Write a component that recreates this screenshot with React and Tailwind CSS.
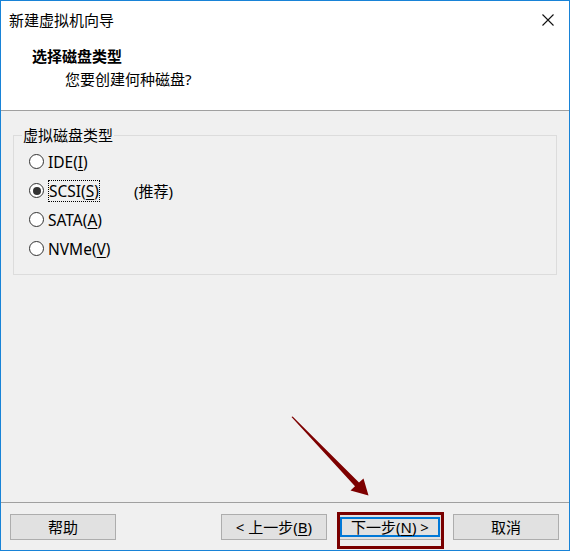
import React from "react";

const font = { fontFamily: '"Noto Sans", "Noto Sans CJK SC", sans-serif' };

function Radio({ checked }) {
  return (
    <span className="w-[15px] h-[15px] rounded-full border border-[#333333] bg-white flex items-center justify-center shrink-0">
      {checked && <span className="w-[8px] h-[8px] rounded-full bg-[#333333]" />}
    </span>
  );
}

function Row({ checked, children, extra }) {
  return (
    <div className="h-[29px] flex items-center">
      <Radio checked={checked} />
      <div className="ml-[4px] flex items-center">{children}</div>
      {extra}
    </div>
  );
}

function Btn({ children, className = "" }) {
  return (
    <button
      className={
        "h-[26px] w-[106px] bg-[#e1e1e1] border border-[#adadad] text-[15px] leading-none text-black flex items-center justify-center " +
        className
      }
    >
      {children}
    </button>
  );
}

export default function App() {
  return (
    <div
      className="w-[570px] h-[551px] border border-[#1883d7] bg-[#f0f0f0] flex flex-col relative text-black"
      style={font}
    >
      {/* header */}
      <div className="bg-white h-[110px] border-b border-[#a0a0a0] flex flex-col">
        <div className="h-[38px] flex items-center justify-between pl-[8px] pr-[15px]">
          <span className="text-[15px] leading-none">新建虚拟机向导</span>
          <svg width="12" height="12" viewBox="0 0 12 12" className="block">
            <path d="M0.5 0.5 L11.5 11.5 M11.5 0.5 L0.5 11.5" stroke="#111" strokeWidth="1.1" fill="none" />
          </svg>
        </div>
        <div className="pl-[31px] mt-[7px] text-[15px] font-bold leading-[20px]">选择磁盘类型</div>
        <div className="pl-[64px] mt-[3px] text-[15px] leading-[20px]">您要创建何种磁盘?</div>
      </div>

      {/* content */}
      <div className="flex-1 px-[12px] pt-[14px]">
        <fieldset className="border border-[#dcdcdc] h-[150px] pl-[8px]">
          <legend className="px-[1px] text-[15px] leading-[20px]">虚拟磁盘类型</legend>
          <div className="pl-[7px] pt-[2px] text-[15.5px] leading-[20px]">
            <Row>
              <span>
                IDE(<span className="underline underline-offset-2">I</span>)
              </span>
            </Row>
            <Row checked extra={<span className="ml-[34px] text-[15px]">(推荐)</span>}>
              <span className="border border-dotted border-black leading-[20px]">
                SCSI(<span className="underline underline-offset-2">S</span>)
              </span>
            </Row>
            <Row>
              <span>
                SATA(<span className="underline underline-offset-2">A</span>)
              </span>
            </Row>
            <Row>
              <span>
                NVMe(<span className="underline underline-offset-2">V</span>)
              </span>
            </Row>
          </div>
        </fieldset>
      </div>

      {/* footer */}
      <div className="h-[48px] border-t border-[#a0a0a0] pt-[11px] pl-[9px] pr-[10px] flex items-start">
        <Btn>帮助</Btn>
        <div className="flex-1" />
        <Btn>
          &lt; 上一步(<span className="underline underline-offset-2">B</span>)
        </Btn>
        <div className="relative ml-[10px]">
          <Btn className="shadow-[inset_0_0_0_2px_#e1e1e1,inset_0_0_0_4px_#0078d7]">
            下一步(<span className="underline underline-offset-2">N</span>) &gt;
          </Btn>
          <div className="absolute left-0 right-[-1px] top-[-2px] bottom-[-9px] border-[3px] border-[#7a0000] pointer-events-none" />
        </div>
        <Btn className="ml-[10px]">取消</Btn>
      </div>

      {/* annotation arrow */}
      <svg
        className="absolute left-0 top-0 pointer-events-none"
        width="570"
        height="551"
        viewBox="0 0 570 551"
      >
        <polygon
          points="290.5,416 291.6,415.6 358,481.6 362.5,477.5 367.5,494.5 349.5,489.5 354,485.2"
          fill="#7d0000"
        />
      </svg>
    </div>
  );
}
